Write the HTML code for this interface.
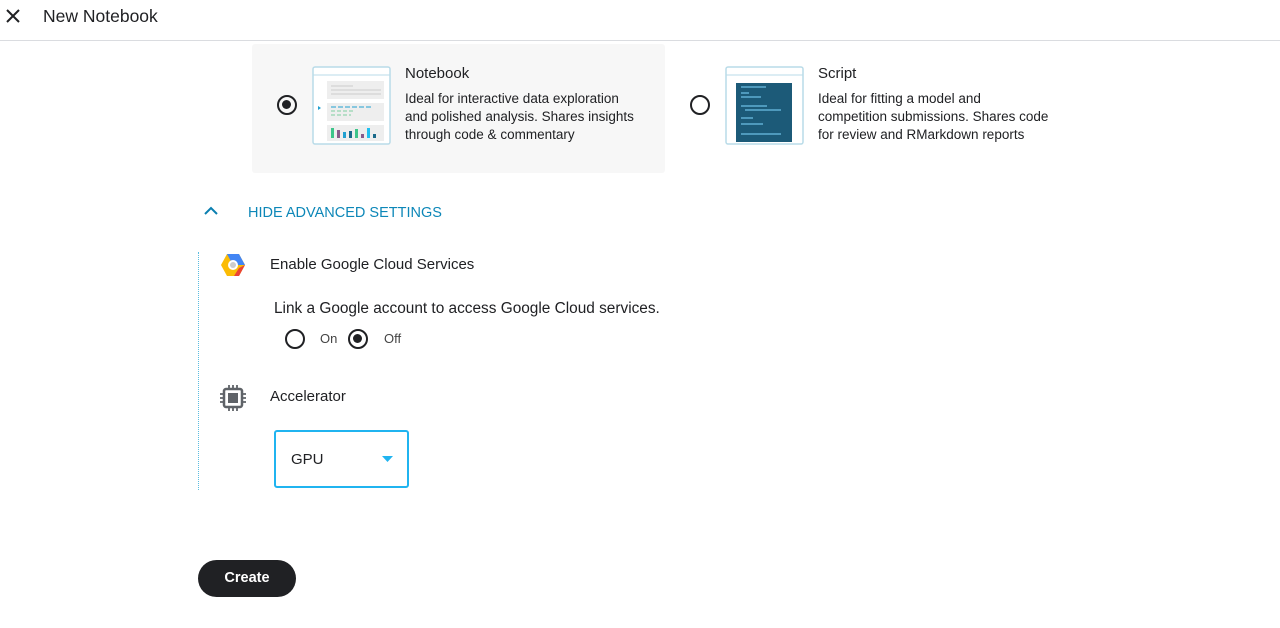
<!DOCTYPE html>
<html><head><style>
body{margin:0;width:1280px;height:628px;background:#fff;font-family:"Liberation Sans",sans-serif;color:#202124;position:relative;overflow:hidden}
.a{position:absolute}
.radio{position:absolute;width:18px;height:18px;border:2px solid #202124;border-radius:50%;box-sizing:border-box}
.radio.on::after{content:"";position:absolute;left:3px;top:3px;width:9px;height:9px;border-radius:50%;background:#202124}
.t{font-size:13.5px;line-height:18px;color:#202124}
</style></head><body>
<div class="a" style="left:0;top:40px;width:1280px;height:1px;background:#dadce0"></div>
<svg class="a" style="left:5px;top:8px" width="16" height="16"><path d="M2 2L14 14M14 2L2 14" stroke="#202124" stroke-width="2"/></svg>
<div class="a" style="left:43px;top:6px;font-size:17.5px">New Notebook</div>

<div class="a" style="left:252px;top:44px;width:413px;height:129px;background:#f7f7f7;border-radius:3px"></div>
<div class="radio on" style="left:277px;top:95px;width:20px;height:20px;border-width:2.5px"></div>
<svg class="a" style="left:312px;top:66px" width="80" height="80">
<rect x="1" y="1" width="77" height="77" rx="2" fill="#fff" stroke="#b9dbe8" stroke-width="1.5"/>
<line x1="1" y1="9" x2="78" y2="9" stroke="#b9dbe8"/>
<rect x="15" y="15" width="57" height="18" fill="#eee"/><rect x="15" y="37" width="57" height="18" fill="#eee"/><rect x="15" y="59" width="57" height="16" fill="#eee"/>
<path d="M19 20h22M19 24h50M19 28h50" stroke="#ccc"/><path d="M19 41h42" stroke="#20a0d0" stroke-dasharray="5 2"/><path d="M19 45h22M19 49h20" stroke="#7fcfa0" stroke-dasharray="4 2"/>
<path d="M6 40l3 2-3 2z" fill="#20a0d0"/>
<rect x="19" y="62" width="3" height="10" fill="#3ec48a"/><rect x="25" y="64" width="3" height="8" fill="#8a5a8a"/><rect x="31" y="66" width="3" height="6" fill="#20a0d0"/><rect x="37" y="65" width="3" height="7" fill="#1a6a8a"/><rect x="43" y="63" width="3" height="9" fill="#3ec48a"/><rect x="49" y="68" width="3" height="4" fill="#8a5a8a"/><rect x="55" y="62" width="3" height="10" fill="#20c0f0"/><rect x="61" y="68" width="3" height="4" fill="#1a6a8a"/>
</svg>
<div class="a" style="left:405px;top:65px;font-size:15px">Notebook</div>
<div class="a t" style="left:405px;top:90px">Ideal for interactive data exploration<br>and polished analysis. Shares insights<br>through code &amp; commentary</div>

<div class="radio" style="left:690px;top:95px;width:20px;height:20px;border-width:2px"></div>
<svg class="a" style="left:725px;top:66px" width="80" height="80">
<rect x="1" y="1" width="77" height="77" rx="2" fill="#fff" stroke="#b9dbe8" stroke-width="1.5"/>
<line x1="1" y1="9" x2="78" y2="9" stroke="#b9dbe8"/>
<rect x="11" y="17" width="56" height="59" fill="#1c5a78"/>
<path d="M16 21h25M16 27h8M16 31h20M16 40h26M20 44h36M16 52h12M16 58h22M16 68h40" stroke="#7fd8ff" stroke-width="1"/>
</svg>
<div class="a" style="left:818px;top:65px;font-size:15px">Script</div>
<div class="a t" style="left:818px;top:90px">Ideal for fitting a model and<br>competition submissions. Shares code<br>for review and RMarkdown reports</div>

<svg class="a" style="left:203px;top:206px" width="16" height="10"><path d="M2 8l6-6 6 6" fill="none" stroke="#0a7fb0" stroke-width="2"/></svg>
<div class="a" style="left:248px;top:205px;font-size:14.5px;color:#0d87b8">HIDE ADVANCED SETTINGS</div>
<div class="a" style="left:198px;top:252px;height:238px;border-left:1px dotted #5bbde0"></div>

<svg class="a" style="left:220px;top:253px" width="26" height="24" viewBox="0 0 26 24">
<path d="M7 1h12l6 11-6 11H7L1 12z" fill="#fbbc05"/><path d="M7 1h12l6 11H13z" fill="#4285f4"/><path d="M25 12l-6 11H14l5-8z" fill="#ea4335"/>
<circle cx="13" cy="12" r="5" fill="#fff"/><circle cx="13" cy="12" r="3" fill="#ccc"/>
</svg>
<div class="a" style="left:270px;top:256px;font-size:15px">Enable Google Cloud Services</div>
<div class="a" style="left:274px;top:300px;font-size:15.4px">Link a Google account to access Google Cloud services.</div>
<div class="radio" style="left:285px;top:329px;width:20px;height:20px"></div>
<div class="a" style="left:320px;top:331px;font-size:13px;color:#444">On</div>
<div class="radio on" style="left:348px;top:329px;width:20px;height:20px;border-width:2.5px"></div>
<div class="a" style="left:384px;top:331px;font-size:13px;color:#444">Off</div>

<svg class="a" style="left:220px;top:385px" width="26" height="26" viewBox="0 0 26 26">
<rect x="4" y="4" width="18" height="18" rx="2" fill="none" stroke="#5f6368" stroke-width="2.5"/><rect x="8" y="8" width="10" height="10" fill="#5f6368"/>
<path d="M9 0v4M13 0v4M17 0v4M9 22v4M13 22v4M17 22v4M0 9h4M0 13h4M0 17h4M22 9h4M22 13h4M22 17h4" stroke="#5f6368" stroke-width="1.8"/>
</svg>
<div class="a" style="left:270px;top:388px;font-size:15px">Accelerator</div>
<div class="a" style="left:274px;top:430px;width:135px;height:58px;border:2px solid #20b4f0;border-radius:3px;box-sizing:border-box"></div>
<div class="a" style="left:291px;top:451px;font-size:15px">GPU</div>
<svg class="a" style="left:382px;top:456px" width="12" height="6"><path d="M0 0h11L5.5 6z" fill="#20b4f0"/></svg>

<div class="a" style="left:198px;top:560px;width:98px;height:37px;background:#202124;border-radius:19px;color:#fff;font-weight:bold;font-size:14.5px;line-height:37px;text-align:center">Create</div>
</body></html>
